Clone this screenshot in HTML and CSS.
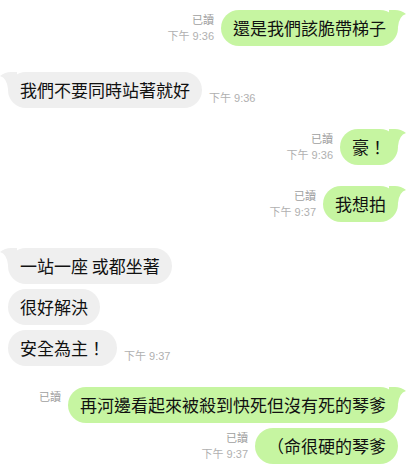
FILE: index.html
```html
<!DOCTYPE html>
<html lang="zh-Hant">
<head>
    <meta charset="UTF-8">
    <meta name="viewport" content="width=device-width, initial-scale=1.0">
    <title>聊天</title>
    <link rel="stylesheet" href="styles.css">
</head>
<body>

    <div class="chat">
        <div class="row out">
            <div class="meta"><span class="read">已讀</span><span>下午 9:36</span></div>
            <div class="bubble tail">還是我們該脆帶梯子</div>
        </div>

        <div class="row in gap-lg">
            <div class="bubble tail">我們不要同時站著就好</div>
            <div class="meta"><span>下午 9:36</span></div>
        </div>

        <div class="row out gap-md">
            <div class="meta"><span class="read">已讀</span><span>下午 9:36</span></div>
            <div class="bubble tail">豪！</div>
        </div>

        <div class="row out gap-md">
            <div class="meta"><span class="read">已讀</span><span>下午 9:37</span></div>
            <div class="bubble tail">我想拍</div>
        </div>

        <!-- incoming group -->
        <div class="row in gap-lg">
            <div class="bubble tail">一站一座 或都坐著</div>
        </div>
        <div class="row in gap-sm">
            <div class="bubble">很好解決</div>
        </div>
        <div class="row in gap-sm">
            <div class="bubble">安全為主！</div>
            <div class="meta"><span>下午 9:37</span></div>
        </div>

        <div class="row out gap-md">
            <div class="meta"><span class="read">已讀</span><span>&nbsp;</span></div>
            <div class="bubble tail">再河邊看起來被殺到快死但沒有死的琴爹</div>
        </div>
        <div class="row out gap-sm">
            <div class="meta"><span class="read">已讀</span><span>下午 9:37</span></div>
            <div class="bubble">（命很硬的琴爹</div>
        </div>
    </div>

</body>
</html>
```

FILE: styles.css
```css
body {
    margin: 0;
    background-color: #ffffff;
    font-family: "Liberation Sans", "Noto Sans CJK TC", sans-serif;
    color: #111;
}

.chat {
    display: flex;
    flex-direction: column;
    padding: 10px 22px 0 8px;
}

.row {
    display: flex;
    align-items: flex-end;
    gap: 7px;
}

.row.out {
    justify-content: flex-end;
}

.row.in {
    justify-content: flex-start;
}

.gap-lg { margin-top: 26px; }
.gap-md { margin-top: 21px; }
.gap-sm { margin-top: 5px; }

.bubble {
    position: relative;
    font-family: "Noto Sans CJK TC", sans-serif;
    font-size: 17px;
    line-height: 20px;
    padding: 8px 12px;
    border-radius: 18px;
    white-space: nowrap;
    text-spacing-trim: space-all;  /* keep full-width （ at line start */
}

.out .bubble {
    background-color: #c6f5a1;
}

.in .bubble {
    background-color: #efefef;
}

/* little speech tail on the first bubble of a group */
.bubble.tail::after {
    content: "";
    position: absolute;
    top: 0;
    width: 17px;
    height: 18px;
    background-color: inherit;
}

.out .bubble.tail::after {
    right: -8px;
    clip-path: path('M0 0 L6 0 Q12 0 17 4 Q10 6 9 17 L0 17 Z');
}

.in .bubble.tail::after {
    left: -8px;
    clip-path: path('M17 0 L11 0 Q5 0 0 4 Q7 6 8 17 L17 17 Z');
}

.meta {
    display: flex;
    flex-direction: column;
    font-size: 11px;
    line-height: 16px;
    color: #b0b0b0;
    padding-bottom: 2px;
    white-space: nowrap;
}

.out .meta {
    align-items: flex-end;
}

.meta .read {
    color: #a0a0a0;
}
```
